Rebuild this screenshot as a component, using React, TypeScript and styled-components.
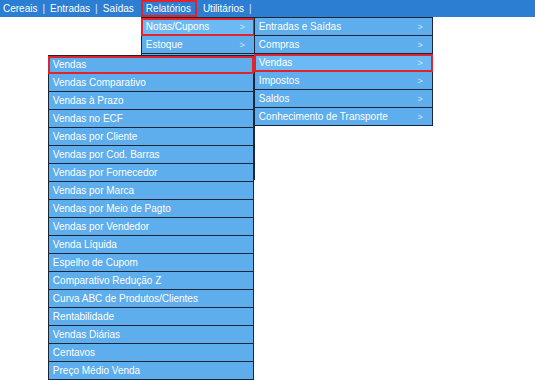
import React from "react";
import styled, { createGlobalStyle } from "styled-components";

const GlobalStyle = createGlobalStyle`
  html, body {
    margin: 0;
    background: #ffffff;
    font-family: "Liberation Sans", Arial, sans-serif;
    font-size: 10px;
  }
`;

const Page = styled.div`
  width: 535px;
  height: 380px;
  overflow: hidden;
  position: relative;
`;

const TopBar = styled.nav`
  display: flex;
  align-items: stretch;
  height: 17px;
  padding-left: 0;
  background: #2b7ed2;
  color: #ffffff;
`;

const NavItem = styled.div<{ $active?: boolean }>`
  display: flex;
  align-items: center;
  padding: ${(p) => (p.$active ? "0 6px 0 5px" : "0 3px")};
  margin: ${(p) => (p.$active ? "0 3px 0 4px" : "0")};
  position: ${(p) => (p.$active ? "relative" : "static")};
  box-shadow: ${(p) => (p.$active ? "inset 0 0 0 2px #e0232d" : "none")};
  white-space: nowrap;
`;

const Sep = styled.span`
  display: flex;
  align-items: center;
  padding: 0 2px;
  color: #d7e9fa;
`;

const Panel = styled.div<{ $width: number }>`
  position: absolute;
  width: ${(p) => p.$width}px;
  border-top: 1px solid #1b2634;
  z-index: 2;
`;

const DropPanel = styled(Panel)`
  left: 0;
  top: 100%;
`;

const SidePanel = styled(Panel)`
  left: 100%;
  top: -1px;
`;

const FlipPanel = styled(Panel)`
  right: calc(100% + 1px);
  top: 1px;
`;

const Row = styled.div<{ $hover?: boolean; $marked?: boolean }>`
  position: relative;
  display: flex;
  align-items: center;
  justify-content: space-between;
  height: 17px;
  padding: 0 9px 0 4px;
  background: ${(p) => (p.$hover ? "#6bbaf5" : "#5eadec")};
  border: 1px solid #1b2634;
  border-top: none;
  color: #ffffff;
  white-space: nowrap;
  outline: ${(p) => (p.$marked ? "2px solid #e0232d" : "none")};
  outline-offset: -2px;
`;

const Arrow = styled.span`
  color: #d2e8fb;
  font-size: 9px;
`;

// only the first two entries show; the rest sit under the Vendas list
const level1 = ["Notas/Cupons", "Estoque", "", "", "", "", "", "", ""];

const level2 = [
  "Entradas e Saídas",
  "Compras",
  "Vendas",
  "Impostos",
  "Saldos",
  "Conhecimento de Transporte",
];

const vendas = [
  "Vendas",
  "Vendas Comparativo",
  "Vendas à Prazo",
  "Vendas no ECF",
  "Vendas por Cliente",
  "Vendas por Cod. Barras",
  "Vendas por Fornecedor",
  "Vendas por Marca",
  "Vendas por Meio de Pagto",
  "Vendas por Vendedor",
  "Venda Líquida",
  "Espelho de Cupom",
  "Comparativo Redução Z",
  "Curva ABC de Produtos/Clientes",
  "Rentabilidade",
  "Vendas Diárias",
  "Centavos",
  "Preço Médio Venda",
];

const VendasMenu = () => (
  <FlipPanel $width={206}>
    {vendas.map((v, i) => (
      <Row key={v} $marked={i === 0}>
        {v}
      </Row>
    ))}
  </FlipPanel>
);

const NotasMenu = () => (
  <SidePanel $width={179}>
    {level2.map((label) => (
      <Row key={label} $hover={label === "Vendas"} $marked={label === "Vendas"}>
        {label}
        <Arrow>&gt;</Arrow>
        {label === "Vendas" && <VendasMenu />}
      </Row>
    ))}
  </SidePanel>
);

const App: React.FC = () => {
  return (
    <Page>
      <GlobalStyle />
      <TopBar>
        <NavItem>Cereais</NavItem>
        <Sep>|</Sep>
        <NavItem>Entradas</NavItem>
        <Sep>|</Sep>
        <NavItem>Saídas</NavItem>
        <NavItem $active>
          Relatórios
          <DropPanel $width={114}>
            {level1.map((label, i) => (
              <Row key={i} $hover={i === 0} $marked={i === 0}>
                {label}
                {label && <Arrow>&gt;</Arrow>}
                {i === 0 && <NotasMenu />}
              </Row>
            ))}
          </DropPanel>
        </NavItem>
        <NavItem>Utilitários</NavItem>
        <Sep>|</Sep>
      </TopBar>
    </Page>
  );
};

export default App;
